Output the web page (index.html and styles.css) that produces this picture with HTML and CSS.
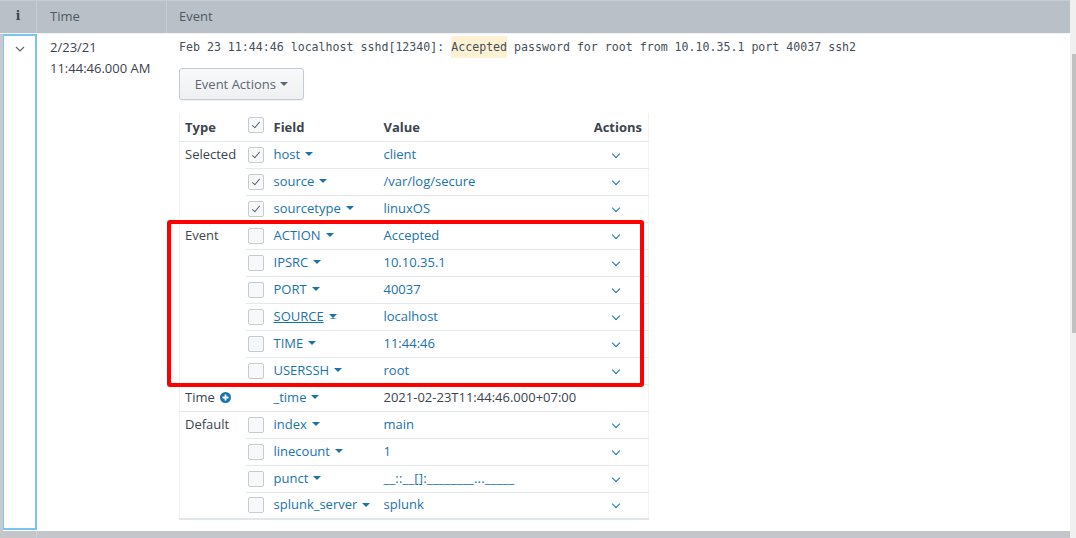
FILE: index.html
```html
<!DOCTYPE html>
<html>
<head>
<meta charset="utf-8">
<link rel="stylesheet" href="styles.css">
</head>
<body>
<div class="page">
  <div class="main">
    <div class="head">
      <div class="hcell hinfo">i</div>
      <div class="hcell">Time</div>
      <div class="hcell hlast">Event</div>
    </div>
    <div class="row">
      <div class="leftcol">
        <div class="expbox">
          <svg class="expand" width="10" height="6" viewBox="0 0 10 6"><path d="M1 1 L5 5 L9 1" fill="none" stroke="#5c6773" stroke-width="1.2"/></svg>
        </div>
      </div>
      <div class="timecol">2/23/21<br>11:44:46.000 AM</div>
      <div class="eventcol">
        <div class="raw">Feb 23 11:44:46 localhost sshd[12340]: <span class="hl">Accepted</span> password for root from 10.10.35.1 port 40037 ssh2</div>
        <button class="btn">Event Actions <span class="caret"></span></button>
        <div class="fwrap">
          <table class="fields">
            <colgroup>
              <col class="w-type">
              <col class="w-cb">
              <col class="w-field">
              <col class="w-val">
              <col class="w-act">
            </colgroup>
            <thead>
              <tr>
                <th class="c-type">Type</th>
                <th class="c-cb"><span class="cb on"></span></th>
                <th class="c-field">Field</th>
                <th class="c-val">Value</th>
                <th class="c-act">Actions</th>
              </tr>
            </thead>
            <tbody>
              <tr>
                <td class="c-type gend" rowspan="3">Selected</td>
                <td class="c-cb"><span class="cb on"></span></td>
                <td class="c-field"><span class="fl">host</span><span class="caret b"></span></td>
                <td class="c-val">client</td>
                <td class="c-act"><span class="chev"></span></td>
              </tr>
              <tr>
                <td class="c-cb"><span class="cb on"></span></td>
                <td class="c-field"><span class="fl">source</span><span class="caret b"></span></td>
                <td class="c-val">/var/log/secure</td>
                <td class="c-act"><span class="chev"></span></td>
              </tr>
              <tr class="gend">
                <td class="c-cb"><span class="cb on"></span></td>
                <td class="c-field"><span class="fl">sourcetype</span><span class="caret b"></span></td>
                <td class="c-val">linuxOS</td>
                <td class="c-act"><span class="chev"></span></td>
              </tr>
              <tr>
                <td class="c-type gend" rowspan="6">Event</td>
                <td class="c-cb"><span class="cb"></span></td>
                <td class="c-field"><span class="fl">ACTION</span><span class="caret b"></span></td>
                <td class="c-val">Accepted</td>
                <td class="c-act"><span class="chev"></span></td>
              </tr>
              <tr>
                <td class="c-cb"><span class="cb"></span></td>
                <td class="c-field"><span class="fl">IPSRC</span><span class="caret b"></span></td>
                <td class="c-val">10.10.35.1</td>
                <td class="c-act"><span class="chev"></span></td>
              </tr>
              <tr>
                <td class="c-cb"><span class="cb"></span></td>
                <td class="c-field"><span class="fl">PORT</span><span class="caret b"></span></td>
                <td class="c-val">40037</td>
                <td class="c-act"><span class="chev"></span></td>
              </tr>
              <tr>
                <td class="c-cb"><span class="cb"></span></td>
                <td class="c-field"><span class="fl ul">SOURCE</span><span class="caret b ulc"></span></td>
                <td class="c-val">localhost</td>
                <td class="c-act"><span class="chev"></span></td>
              </tr>
              <tr>
                <td class="c-cb"><span class="cb"></span></td>
                <td class="c-field"><span class="fl">TIME</span><span class="caret b"></span></td>
                <td class="c-val">11:44:46</td>
                <td class="c-act"><span class="chev"></span></td>
              </tr>
              <tr class="gend">
                <td class="c-cb"><span class="cb"></span></td>
                <td class="c-field"><span class="fl">USERSSH</span><span class="caret b"></span></td>
                <td class="c-val">root</td>
                <td class="c-act"><span class="chev"></span></td>
              </tr>
              <tr class="gend">
                <td class="c-type">Time <svg class="plus" width="11" height="11" viewBox="0 0 11 11"><circle cx="5.5" cy="5.5" r="5.5" fill="#1a73aa"/><path d="M5.5 2.5 V8.5 M2.5 5.5 H8.5" stroke="#fff" stroke-width="1.8"/></svg></td>
                <td class="c-cb"></td>
                <td class="c-field"><span class="fl">_time</span><span class="caret b"></span></td>
                <td class="c-val plain">2021-02-23T11:44:46.000+07:00</td>
                <td class="c-act"></td>
              </tr>
              <tr>
                <td class="c-type gend" rowspan="4">Default</td>
                <td class="c-cb"><span class="cb"></span></td>
                <td class="c-field"><span class="fl">index</span><span class="caret b"></span></td>
                <td class="c-val">main</td>
                <td class="c-act"><span class="chev"></span></td>
              </tr>
              <tr>
                <td class="c-cb"><span class="cb"></span></td>
                <td class="c-field"><span class="fl">linecount</span><span class="caret b"></span></td>
                <td class="c-val">1</td>
                <td class="c-act"><span class="chev"></span></td>
              </tr>
              <tr>
                <td class="c-cb"><span class="cb"></span></td>
                <td class="c-field"><span class="fl">punct</span><span class="caret b"></span></td>
                <td class="c-val punct">__::__[]:________..._____</td>
                <td class="c-act"><span class="chev"></span></td>
              </tr>
              <tr class="last">
                <td class="c-cb"><span class="cb"></span></td>
                <td class="c-field"><span class="fl">splunk_server</span><span class="caret b"></span></td>
                <td class="c-val">splunk</td>
                <td class="c-act"><span class="chev"></span></td>
              </tr>
            </tbody>
          </table>
          <div class="redbox"></div>
        </div>
      </div>
    </div>
    <div class="foot">
      <div class="fcell"></div>
      <div class="fcell"></div>
    </div>
  </div>
  <div class="scroll"><div class="thumb"></div></div>
</div>
</body>
</html>
```
FILE: styles.css
```css
* { box-sizing: border-box; }
html, body { margin: 0; padding: 0; }
body {
  width: 1076px;
  height: 538px;
  overflow: hidden;
  background: #fff;
  font-family: "Open Sans", Lato, sans-serif;
  font-size: 13px;
  color: #3c444d;
}
.page { display: flex; height: 538px; }
.main { width: 1070px; display: flex; flex-direction: column; }
.scroll { width: 6px; background: #f0f0f0; padding-top: 54px; display: flex; justify-content: flex-end; }
.thumb { width: 4px; height: 279px; background: #c1c1c1; }

.head {
  height: 33px;
  background: #b9c0c7;
  border-top: 1px solid #c6ccd2;
  display: grid;
  grid-template-columns: 37px 130px 1fr;
}
.hcell {
  display: flex;
  align-items: center;
  padding-left: 13px;
  color: #4f5963;
  font-size: 13px;
  border-right: 1px solid #c7cdd3;
  padding-bottom: 2px;
}
.hcell.hlast { border-right: none; padding-left: 12px; }
.hinfo {
  justify-content: center;
  padding-left: 0;
  font-family: "DejaVu Serif", serif;
  font-weight: bold;
  font-size: 12px;
  color: #3c444d;
}

.row {
  flex: 1;
  display: grid;
  grid-template-columns: 37px 130px 1fr;
  border-top: 1px solid #f2f3f5;
}
.leftcol {
  background: #fff;
  border-left: 3px solid #c6cacf;
  padding-bottom: 1px;
  display: flex;
}
.expbox {
  flex: 1;
  border: 2px solid #78c6f0;
  border-left-width: 1.5px;
  display: flex;
  justify-content: center;
  padding-top: 10px;
}
.expand { display: block; }
.timecol {
  padding: 3px 0 0 13px;
  line-height: 21px;
  color: #3c444d;
}
.eventcol {
  padding: 2px 0 0 12px;
}
.raw {
  font-family: "DejaVu Sans Mono", monospace;
  font-size: 11.6px;
  line-height: 22px;
  color: #474f58;
  white-space: nowrap;
}
.hl { background: #fdf1d3; display: inline-block; }
.btn {
  display: block;
  margin-top: 10px;
  width: 125px;
  height: 32px;
  border: 1px solid #c3cbd4;
  border-radius: 3px;
  background: linear-gradient(#f8f9fa, #eef0f2);
  box-shadow: 0 1px 1px rgba(0,0,0,0.06);
  font-family: "Open Sans", Lato, sans-serif;
  font-size: 13px;
  color: #5c6773;
  padding: 0 0 1px 0;
}
.caret {
  display: inline-block;
  width: 0; height: 0;
  border-left: 4px solid transparent;
  border-right: 4px solid transparent;
  border-top: 4px solid #5c6773;
  vertical-align: middle;
  margin-left: 1px;
  margin-top: -2px;
}
.caret.b { border-top-color: #1a73aa; margin-left: 5px; }
.caret.ulc { border-bottom: 1px solid #1a73aa; height: 5px; border-top-width: 4px; }

.fwrap {
  position: relative;
  width: 469px;
  margin-top: 13px;
}
.fields {
  width: 469px;
  table-layout: fixed;
  border-collapse: collapse;
  border-left: 1px solid #f1f3f5;
  border-right: 1px solid #f1f3f5;
  border-bottom: 2px solid #e1e6eb;
}
.w-type { width: 66px; }
.w-cb { width: 28px; }
.w-field { width: 110px; }
.w-val { width: 207px; }
.w-act { width: 58px; }
.fields th, .fields td {
  height: 27px;
  padding: 0;
  text-align: left;
  vertical-align: middle;
  white-space: nowrap;
  border-bottom: 1px solid #e4e8ec;
}
.fields td { padding-bottom: 2px; }
.fields th {
  font-weight: bold;
  color: #3c444d;
  height: 28px;
  border-bottom: 1px solid #e1e6eb;
  padding-top: 1px;
}
.fields tr.last td { border-bottom: none; }
.fields td.c-type { vertical-align: top; padding-top: 3px; color: #3c444d; }
.c-type { padding-left: 5px !important; }
.c-cb { padding-left: 2px !important; }
.fields td.c-cb { padding-bottom: 0; }
.c-field { padding-left: 0 !important; color: #1a73aa; }
.c-val { padding-left: 0 !important; color: #1a73aa; }
.c-val.plain { color: #3c444d; }
.c-val.punct { letter-spacing: 0.2px; }
.fields th.c-act { text-align: right; padding-right: 6px !important; }
.fields td.c-act { text-align: center; padding-right: 6px; padding-bottom: 0; }
.fields th.c-cb { padding-bottom: 4px; }
.cb {
  display: block;
  width: 16px;
  height: 16px;
  border: 1px solid #c3cbd4;
  border-radius: 2px;
  background: #f7f8fa;
  position: relative;
}
.cb.on::after {
  content: "";
  position: absolute;
  left: 5px;
  top: 2px;
  width: 3px;
  height: 7px;
  border-right: 1.2px solid #5c6773;
  border-bottom: 1.2px solid #5c6773;
  transform: rotate(40deg);
}
.fl.ul { text-decoration: underline; }
.chev {
  display: inline-block;
  width: 6px;
  height: 6px;
  border-right: 1.4px solid #1a73aa;
  border-bottom: 1.4px solid #1a73aa;
  transform: rotate(45deg);
  margin-top: -5px;
  vertical-align: middle;
}
.plus { vertical-align: -1px; margin-left: 2px; }
.redbox {
  position: absolute;
  left: -12px;
  top: 107px;
  width: 477px;
  height: 167px;
  border: 4px solid #ff0000;
  border-radius: 3px;
  pointer-events: none;
}

.foot {
  height: 7px;
  background: #c3c7cb;
  display: grid;
  grid-template-columns: 37px 1fr;
}
.fcell:first-child { border-right: 1px solid #cfd3d7; }
```
